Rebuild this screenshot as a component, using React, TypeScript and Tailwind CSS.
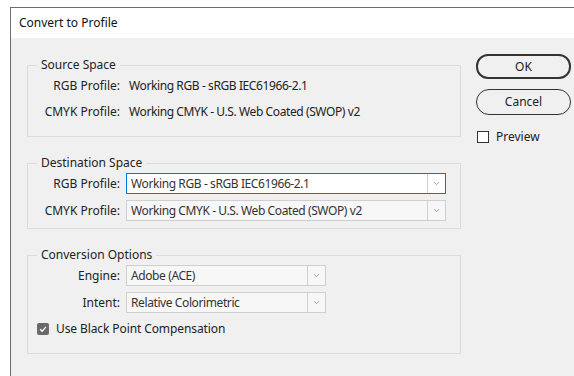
import { ChevronDown } from 'lucide-react';

const FONT = "font-['Noto_Sans','Open_Sans',sans-serif]";

function Select({ value, width, focused = false, light = false }: { value: string; width: string; focused?: boolean; light?: boolean }) {
    return (
        <div
            className={`${width} h-[21px] flex border ${focused ? 'border-[#0078d7] bg-white' : 'border-[#cfcfcf]'} ${light && !focused ? 'bg-[#f7f7f7]' : ''}`}
        >
            <div className="flex-1 flex items-center pl-[4px] text-[12px] tracking-[-0.4px] text-[#333] whitespace-nowrap overflow-hidden">{value}</div>
            <div className="w-[18px] flex items-center justify-center border-l border-[#cfcfcf]">
                <ChevronDown className="w-[9px] h-[9px] text-[#707070]" strokeWidth={1.75} />
            </div>
        </div>
    );
}

function Group({ title, children, className }: { title: string; children: React.ReactNode; className: string }) {
    return (
        <fieldset className={`border border-[#dcdcdc] ${className}`}>
            <legend className="ml-[9px] px-[4px] text-[12px] leading-[16px] text-[#222]">{title}</legend>
            {children}
        </fieldset>
    );
}

function Row({ label, children }: { label: string; children: React.ReactNode }) {
    return (
        <div className="flex items-center">
            <div className="w-[92px] text-right text-[12px] text-[#222] whitespace-nowrap">{label}</div>
            {children}
        </div>
    );
}

export default function App() {
    return (
        <div className={`w-[574px] h-[376px] bg-white pt-[7px] pl-[10px] overflow-hidden ${FONT}`}>
            <div className="w-[600px] h-[400px] border-t border-l border-[#6e6e6e] flex flex-col">
                {/* Title bar */}
                <div className="h-[30px] bg-white flex items-center pl-[8px] text-[12px] text-[#111]">Convert to Profile</div>

                {/* Body */}
                <div className="flex-1 bg-[#f0f0f0] flex pl-[16px]">
                    <div className="w-[434px] flex flex-col pt-[19px]">
                        <Group title="Source Space" className="pt-[3px] pb-[14px] flex flex-col gap-[6px]">
                            <Row label="RGB Profile:">
                                <div className="h-[20px] flex items-center ml-[9px] text-[12px] tracking-[-0.4px] text-[#222]">Working RGB - sRGB IEC61966-2.1</div>
                            </Row>
                            <Row label="CMYK Profile:">
                                <div className="h-[20px] flex items-center ml-[9px] text-[12px] tracking-[-0.4px] text-[#222]">Working CMYK - U.S. Web Coated (SWOP) v2</div>
                            </Row>
                        </Group>

                        <Group title="Destination Space" className="mt-[18px] pt-[2px] pb-[7px] flex flex-col gap-[6px]">
                            <Row label="RGB Profile:">
                                <div className="ml-[6px]">
                                    <Select value="Working RGB - sRGB IEC61966-2.1" width="w-[320px]" focused />
                                </div>
                            </Row>
                            <Row label="CMYK Profile:">
                                <div className="ml-[6px]">
                                    <Select value="Working CMYK - U.S. Web Coated (SWOP) v2" width="w-[320px]" light />
                                </div>
                            </Row>
                        </Group>

                        <Group title="Conversion Options" className="mt-[18px] pt-[2px] pb-[16px] flex flex-col gap-[6px]">
                            <Row label="Engine:">
                                <div className="ml-[6px]">
                                    <Select value="Adobe (ACE)" width="w-[200px]" light />
                                </div>
                            </Row>
                            <Row label="Intent:">
                                <div className="ml-[6px]">
                                    <Select value="Relative Colorimetric" width="w-[200px]" light />
                                </div>
                            </Row>
                            <div className="flex items-center h-[16px] mt-[2px] pl-[9px]">
                                <div className="w-[12px] h-[12px] rounded-[2px] bg-[#6a6a6a] flex items-center justify-center">
                                    <svg viewBox="0 0 12 12" className="w-[10px] h-[10px]">
                                        <path d="M2.5 6.2 L5 8.6 L9.6 3.4" fill="none" stroke="white" strokeWidth="1.6" />
                                    </svg>
                                </div>
                                <span className="ml-[7px] text-[12px] tracking-[-0.1px] text-[#222]">Use Black Point Compensation</span>
                            </div>
                        </Group>
                    </div>

                    {/* Buttons */}
                    <div className="ml-[15px] pt-[16px] flex flex-col">
                        <button className="w-[95px] h-[25px] rounded-[12px] border-2 border-[#333] bg-[#f0f0f0] text-[12px] text-[#222]">OK</button>
                        <button className="mt-[10px] w-[95px] h-[26px] rounded-[13px] border border-[#333] bg-[#f0f0f0] text-[12px] text-[#222]">Cancel</button>
                        <div className="mt-[13px] flex items-center pl-[1px]">
                            <div className="w-[12px] h-[12px] border border-[#333] bg-white" />
                            <span className="ml-[7px] text-[12px] text-[#222]">Preview</span>
                        </div>
                    </div>
                </div>
            </div>
        </div>
    );
}
